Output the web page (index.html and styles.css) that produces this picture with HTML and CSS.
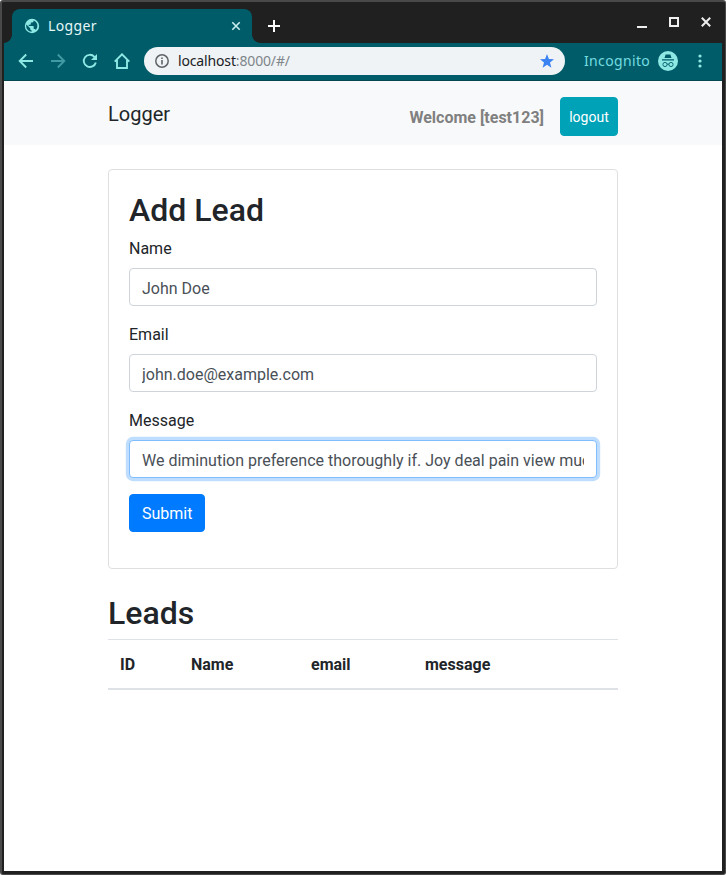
FILE: index.html
```html
<!DOCTYPE html>
<html lang="en">
<head>
<meta charset="utf-8">
<title>Logger</title>
<link rel="stylesheet" href="styles.css">
</head>
<body>
<div class="window">
  <header class="titlebar">
    <div class="tab">
      <svg class="globe" width="16" height="16" viewBox="0 0 16 16"><circle cx="8" cy="8" r="7.200" fill="#8ee8e4"/><path d="M2.300 6.600 6.200 10.200v1.200l1.400 1.200v1.200C4.700 13.600 2.200 11.200 2.200 8zM9.600 2.400v.7c0 .8-.6 1.400-1.400 1.400H6.800V6c0 .4-.3.700-.7.700H4.700v1.400H9c.4 0 .7.300.7.700v2.100h.7c.6 0 1.200.4 1.300 1A5.800 5.800 0 0 0 9.600 2.400z" fill="#005c69"/></svg>
      <span class="tab-title">Logger</span>
      <svg class="tab-close" width="10" height="10" viewBox="0 0 10 10"><path d="M1.300 1.300l7.400 7.400M8.700 1.300 1.300 8.700" stroke="#c9eef0" stroke-width="1.600"/></svg>
    </div>
    <svg class="new-tab" width="12" height="12" viewBox="0 0 12 12"><path d="M6 0v12M0 6h12" stroke="#fff" stroke-width="2"/></svg>
    <div class="window-buttons">
      <svg width="10" height="12" viewBox="0 0 10 12"><path d="M0 11h10" stroke="#eee" stroke-width="2"/></svg>
      <svg width="10" height="10" viewBox="0 0 10 10"><path d="M1 1h8v8H1z" fill="none" stroke="#eee" stroke-width="2"/></svg>
      <svg width="10" height="10" viewBox="0 0 10 10"><path d="M.8.8l8.400 8.400M9.200.8.8 9.200" stroke="#eee" stroke-width="2"/></svg>
    </div>
  </header>
  <div class="toolbar">
    <svg class="nav-icon" width="16" height="16" viewBox="0 0 16 16"><path d="M15 8H2M8.200 1.500 1.700 8l6.500 6.500" fill="none" stroke="#8ee8e4" stroke-width="1.900"/></svg>
    <svg class="nav-icon" width="16" height="16" viewBox="0 0 16 16"><path d="M1 8h13M7.800 1.500 14.300 8l-6.500 6.500" fill="none" stroke="#3f9aa3" stroke-width="1.900"/></svg>
    <svg class="nav-icon" width="16" height="16" viewBox="0 0 16 16"><path d="M13.800 9.500a6.100 6.100 0 1 1-1.400-5.700L14 5.500" fill="none" stroke="#8ee8e4" stroke-width="1.900"/><path d="M15 1v6H9z" fill="#8ee8e4"/></svg>
    <svg class="nav-icon" width="16" height="16" viewBox="0 0 16 16"><path d="M.7 8.600 8 1.300l7.300 7.300M3 7v8h10V7" fill="none" stroke="#8ee8e4" stroke-width="1.900"/></svg>
    <div class="address">
      <svg width="14" height="14" viewBox="0 0 14 14"><circle cx="7" cy="7" r="6.200" fill="none" stroke="#5f6368" stroke-width="1.500"/><path d="M7 6v4.500M7 3.500V5" stroke="#5f6368" stroke-width="1.600"/></svg>
      <span class="url">localhost<span class="url-rest">:8000/#/</span></span>
      <svg class="star" width="14" height="14" viewBox="0 0 14 14"><path d="m7 0 1.900 4.900 5.100.3-4 3.300 1.400 5.200L7 10.800l-4.400 2.900L4 8.500 0 5.200l5.100-.3z" fill="#3b82f3"/></svg>
    </div>
    <span class="incognito">Incognito</span>
    <svg class="spy" width="20" height="20" viewBox="0 0 20 20"><circle cx="10" cy="10" r="10" fill="#8ee8e4"/><path d="M7.600 3.500h4.800L13.500 7h-7zM4 8.200h12v1.200H4z" fill="#005c69"/><g fill="none" stroke="#005c69" stroke-width=".9"><circle cx="7" cy="13.500" r="2.100"/><circle cx="13" cy="13.500" r="2.100"/><path d="M9 13.300q1-.6 2 0"/></g></svg>
    <svg class="menu" width="4" height="14" viewBox="0 0 4 14"><g fill="#8ee8e4"><circle cx="2" cy="2" r="1.600"/><circle cx="2" cy="7" r="1.600"/><circle cx="2" cy="12" r="1.600"/></g></svg>
  </div>
  <main class="page">
    <nav class="navbar">
      <div class="container navbar-row">
        <a class="brand">Logger</a>
        <strong class="welcome">Welcome [test123]</strong>
        <button class="btn btn-info">logout</button>
      </div>
    </nav>
    <div class="container">
      <form class="card">
        <h2>Add Lead</h2>
        <div class="form-group"><label for="name">Name</label><input id="name" class="form-control" value="John Doe"></div>
        <div class="form-group"><label for="email">Email</label><input id="email" class="form-control" value="john.doe@example.com"></div>
        <div class="form-group"><label for="message">Message</label><input id="message" class="form-control focused" value="We diminution preference thoroughly if. Joy deal pain view much"></div>
        <div class="form-group"><button class="btn btn-primary" type="button">Submit</button></div>
      </form>
      <h2>Leads</h2>
      <table class="table">
        <thead><tr><th class="col-id">ID</th><th class="col-name">Name</th><th class="col-email">email</th><th>message</th></tr></thead>
      </table>
    </div>
  </main>
</div>
</body>
</html>
```
FILE: styles.css
```css
* { box-sizing: border-box; }
html { background: #fff; }
body {
  margin: 0;
  font: 16px/24px Roboto, sans-serif;
  color: #212529;
}
svg { display: block; flex: none; }
.window {
  height: 875px;
  display: flex;
  flex-direction: column;
  border: solid #494949;
  border-width: 2px 1px 1px 2px;
  border-radius: 3px;
  background: #202020;
  padding: 0 3px 3px 2px;
  overflow: hidden;
}
.titlebar {
  flex: none;
  height: 41px;
  display: flex;
  align-items: flex-start;
}
.tab {
  position: relative;
  width: 240px;
  height: 34px;
  margin: 7px 0 0 8px;
  padding: 0 11px 0 12px;
  display: flex;
  align-items: center;
  border-radius: 8px 8px 0 0;
  background: #005c69;
  color: #e6f7f8;
}
.tab::before, .tab::after {
  content: "";
  position: absolute;
  bottom: 0;
  width: 8px;
  height: 8px;
}
.tab::before { left: -8px; background: radial-gradient(circle at 0 0, #202020 7.5px, #005c69 8px); }
.tab::after { right: -8px; background: radial-gradient(circle at 100% 0, #202020 7.5px, #005c69 8px); }
.tab-title {
  margin: 0 auto 0 8px;
  font: 14px/20px "Noto Sans", sans-serif;
  letter-spacing: .35px;
}
.new-tab { margin: 18px 0 0 16px; }
.window-buttons {
  display: flex;
  gap: 22px;
  margin: 15px 11px 0 auto;
}
.window-buttons svg:first-child { margin-top: -1px; }
.toolbar {
  flex: none;
  height: 38px;
  padding: 0 20px 1px 14px;
  display: flex;
  align-items: center;
  background: #005c69;
  border-bottom: 1px solid #044751;
  font: 14px/20px "Noto Sans", sans-serif;
}
.nav-icon { margin-right: 16px; }
.nav-icon:nth-child(4) { margin-right: 14px; }
.address {
  width: 421px;
  height: 28px;
  padding: 0 11px;
  display: flex;
  align-items: center;
  border-radius: 14px;
  background: #eff3f5;
  color: #202124;
}
.url { margin: 0 auto 0 9px; letter-spacing: -.15px; }
.url-rest { color: #80868b; }
.incognito { margin-left: 19px; color: #74dde0; letter-spacing: .35px; }
.spy { margin-left: auto; }
.menu { margin-left: 20px; }
.page { flex: 1; background: #fff; }
.navbar {
  height: 64px;
  background: #f8f9fa;
}
.container { width: 510px; margin: 0 auto; }
.navbar-row {
  height: 100%;
  display: flex;
  align-items: center;
}
.brand { margin-top: 2px; font-size: 20px; line-height: 30px; }
.welcome { margin: 10px 16px 0 auto; color: #808080; }
.btn {
  border: 1px solid;
  border-radius: 4px;
  font-family: inherit;
  color: #fff;
}
.btn-info {
  width: 58px;
  height: 39px;
  margin-top: 6px;
  padding: 2px 0 0;
  background: #00a2b8;
  border-color: #00a2b8;
  font-size: 14px;
}
.btn-primary {
  display: block;
  height: 38px;
  padding: 7px 12px 5px;
  background: #007bff;
  border-color: #007bff;
  font-size: 16px;
  line-height: 24px;
}
.card {
  margin: 24px 0;
  padding: 20px;
  border: 1px solid #dfdfdf;
  border-radius: 4px;
}
h2 { margin: 0 0 7px; padding-top: 1px; font-size: 32px; line-height: 38.4px; font-weight: 500; }
.card + h2 { margin-bottom: 6px; }
.form-group { margin-bottom: 16px; }
label { display: block; margin-bottom: 7px; padding-top: 1px; }
.form-control {
  display: block;
  width: 100%;
  height: 38px;
  padding: 7px 12px 5px;
  border: 1px solid #ced4da;
  border-radius: 4px;
  font: inherit;
  color: #495057;
  background: #fff;
}
.focused { border-color: #80bdff; box-shadow: 0 0 0 3.2px #bfdeff; }
.table {
  width: 100%;
  table-layout: fixed;
  border-collapse: collapse;
}
th {
  padding: 13px 12px 11px;
  text-align: left;
  border-top: 1px solid #dee2e6;
  border-bottom: 2px solid #dee2e6;
}
.col-id { width: 71px; }
.col-name { width: 120px; }
.col-email { width: 114px; }
```
